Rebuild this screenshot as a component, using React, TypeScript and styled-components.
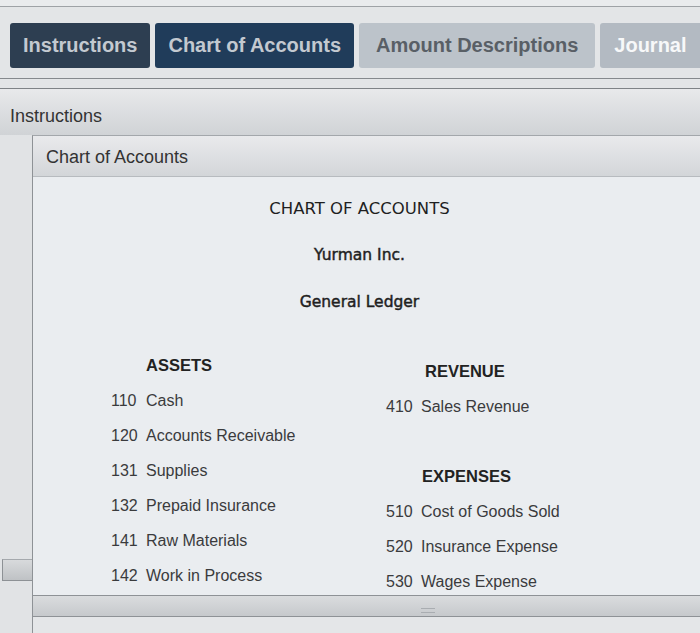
import React from 'react';
import styled, { createGlobalStyle } from 'styled-components';

const GlobalStyle = createGlobalStyle`
  html, body {
    margin: 0;
    padding: 0;
    background: #e3e5e7;
    overflow: hidden;
  }
  * {
    box-sizing: border-box;
  }
`;

const Page = styled.div`
  width: 700px;
  height: 633px;
  overflow: hidden;
  font-family: 'Liberation Sans', Arial, sans-serif;
  border-top: 6px solid #e9ebed;
  background: #e3e5e7;
`;

const TopLine = styled.div`
  height: 1px;
  background: #9ea2a6;
`;

const TabBar = styled.div`
  display: flex;
  gap: 5px;
  padding: 16px 0 0 10px;
  height: 72px;
  border-bottom: 1px solid #85898d;
  white-space: nowrap;
  overflow: hidden;
`;

type TabVariant = 'dark' | 'navy' | 'light' | 'muted';

const Tab = styled.div<{ $variant: TabVariant }>`
  flex-shrink: 0;
  height: 45px;
  display: flex;
  align-items: center;
  padding: ${({ $variant }) =>
    $variant === 'muted' ? '0 40px 0 14px' : $variant === 'light' ? '0 17px' : '0 13px'};
  border-radius: 3px;
  font-size: 20px;
  font-weight: 700;
  background: ${({ $variant }) =>
    $variant === 'dark'
      ? '#2d3e51'
      : $variant === 'navy'
      ? '#203c5a'
      : $variant === 'light'
      ? '#bcc3ca'
      : '#b3bac2'};
  color: ${({ $variant }) =>
    $variant === 'dark' || $variant === 'navy'
      ? '#c3c9d0'
      : $variant === 'light'
      ? '#595f66'
      : '#f7f8f9'};
`;

const Spacer = styled.div`
  height: 10px;
  border-bottom: 1px solid #7f8387;
`;

const OuterPanel = styled.div`
  display: flex;
  flex-direction: column;
`;

const OuterHeader = styled.div`
  height: 46px;
  display: flex;
  align-items: center;
  padding: 8px 0 0 10px;
  font-size: 18px;
  color: #333;
  background: linear-gradient(#e8e9eb, #d0d3d6);
`;

const OuterBody = styled.div`
  display: flex;
`;

const Gutter = styled.div`
  width: 32px;
  flex-shrink: 0;
  display: flex;
  flex-direction: column;
  justify-content: flex-end;
  padding: 0 0 56px 2px;
  background: #e1e3e5;
`;

const GutterFoot = styled.div`
  height: 22px;
  border-top: 1px solid #a5a9ad;
  border-left: 1px solid #8d9195;
  border-bottom: 1px solid #8d9195;
  background: linear-gradient(#d8dadc, #bfc2c5);
`;

const InnerPanel = styled.div`
  flex: 1;
  border-left: 1px solid #8e9296;
  border-top: 1px solid #a3a7ab;
  display: flex;
  flex-direction: column;
`;

const InnerHeader = styled.div`
  height: 41px;
  display: flex;
  align-items: center;
  padding: 2px 0 0 13px;
  font-size: 18px;
  color: #333;
  background: linear-gradient(#e9eaec, #d3d6d9);
  border-bottom: 1px solid #b7bbbf;
`;

const InnerBody = styled.div`
  height: 418px;
  background: #eaedf0;
  padding-top: 21px;
`;

const TitleBlock = styled.div`
  display: flex;
  flex-direction: column;
  align-items: center;
  gap: 26px;
  padding-right: 14px;
  font-family: 'DejaVu Sans', Verdana, sans-serif;
  color: #1f1f1f;
`;

const Title = styled.div<{ $size: number; $heavy?: boolean }>`
  font-size: ${({ $size }) => $size}px;
  line-height: 21px;
  -webkit-text-stroke: ${({ $heavy }) => ($heavy ? '0.45px #1f1f1f' : '0')};
`;

const Columns = styled.div`
  display: grid;
  grid-template-columns: 275px 1fr;
  padding: 35px 0 0 78px;
`;

const Column = styled.div<{ $offset: number }>`
  display: flex;
  flex-direction: column;
  padding-top: ${({ $offset }) => $offset}px;
`;

const SectionHead = styled.div<{ $indent: number }>`
  height: 35px;
  display: flex;
  align-items: center;
  padding-left: ${({ $indent }) => $indent}px;
  font-size: 16.5px;
  font-weight: 700;
  color: #222;
`;

const Row = styled.div`
  height: 35px;
  display: flex;
  align-items: center;
  font-size: 16px;
  color: #3a3b3d;
`;

const Num = styled.span`
  width: 35px;
  flex-shrink: 0;
`;

const Gap = styled.div`
  height: 35px;
`;

const InnerFoot = styled.div`
  height: 22px;
  border-top: 1px solid #8e9296;
  border-bottom: 1px solid #8e9296;
  background: linear-gradient(#dadcde, #c6c9cc);
  display: flex;
  justify-content: center;
  align-items: flex-end;
  padding: 0 0 3px 122px;
`;

const Grip = styled.div`
  width: 14px;
  height: 5px;
  border-top: 1px solid #a9adb1;
  border-bottom: 1px solid #a9adb1;
`;

const BottomStrip = styled.div`
  height: 20px;
  background: #e4e6e8;
`;

const assets = [
  ['110', 'Cash'],
  ['120', 'Accounts Receivable'],
  ['131', 'Supplies'],
  ['132', 'Prepaid Insurance'],
  ['141', 'Raw Materials'],
  ['142', 'Work in Process'],
];

const expenses = [
  ['510', 'Cost of Goods Sold'],
  ['520', 'Insurance Expense'],
  ['530', 'Wages Expense'],
];

const App = () => {
  return (
    <Page>
      <GlobalStyle />
      <TopLine />
      <TabBar>
        <Tab $variant="dark">Instructions</Tab>
        <Tab $variant="navy">Chart of Accounts</Tab>
        <Tab $variant="light">Amount Descriptions</Tab>
        <Tab $variant="muted">Journal</Tab>
      </TabBar>
      <Spacer />
      <OuterPanel>
        <OuterHeader>Instructions</OuterHeader>
        <OuterBody>
          <Gutter>
            <GutterFoot />
          </Gutter>
          <InnerPanel>
            <InnerHeader>Chart of Accounts</InnerHeader>
            <InnerBody>
              <TitleBlock>
                <Title $size={16.5}>CHART OF ACCOUNTS</Title>
                <Title $size={15.5} $heavy>
                  Yurman Inc.
                </Title>
                <Title $size={15.5} $heavy>
                  General Ledger
                </Title>
              </TitleBlock>
              <Columns>
                <Column $offset={0}>
                  <SectionHead $indent={35}>ASSETS</SectionHead>
                  {assets.map(([n, name]) => (
                    <Row key={n}>
                      <Num>{n}</Num>
                      {name}
                    </Row>
                  ))}
                </Column>
                <Column $offset={6}>
                  <SectionHead $indent={39}>REVENUE</SectionHead>
                  <Row>
                    <Num>410</Num>
                    Sales Revenue
                  </Row>
                  <Gap />
                  <SectionHead $indent={36}>EXPENSES</SectionHead>
                  {expenses.map(([n, name]) => (
                    <Row key={n}>
                      <Num>{n}</Num>
                      {name}
                    </Row>
                  ))}
                </Column>
              </Columns>
            </InnerBody>
            <InnerFoot>
              <Grip />
            </InnerFoot>
            <BottomStrip />
          </InnerPanel>
        </OuterBody>
      </OuterPanel>
    </Page>
  );
};

export default App;
